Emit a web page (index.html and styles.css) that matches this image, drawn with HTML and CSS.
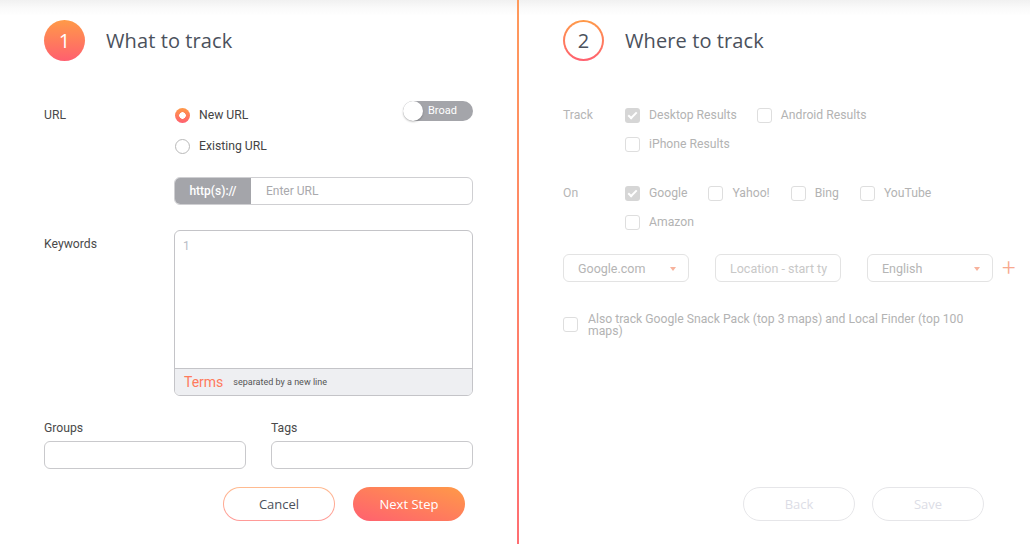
FILE: index.html
```html
<!DOCTYPE html>
<html lang="en">
<head>
  <meta charset="UTF-8" />
  <meta name="viewport" content="width=device-width, initial-scale=1.0"/>
  <title>Add Keywords</title>
  <link rel="stylesheet" href="styles.css">
</head>
<body>

  <div class="page">
    <div class="panel panel-left">
      <div class="step-head">
        <div class="step-num filled">1</div>
        <h2>What to track</h2>
      </div>

      <div class="form-row url-row">
        <div class="row-label">URL</div>
        <div class="row-control">
          <div class="url-options">
            <div class="radios">
              <label class="radio checked"><span class="dot"></span>New URL</label>
              <label class="radio"><span class="dot"></span>Existing URL</label>
            </div>
            <div class="toggle"><span class="knob"></span><span class="toggle-text">Broad</span></div>
          </div>
          <div class="url-input">
            <span class="prefix">http(s)://</span>
            <span class="placeholder">Enter URL</span>
          </div>
        </div>
      </div>

      <div class="form-row keywords-row">
        <div class="row-label">Keywords</div>
        <div class="row-control">
          <div class="keywords-box">
            <div class="keywords-area"><span class="line-num">1</span></div>
            <div class="keywords-foot">
              <span class="terms">Terms</span>
              <span class="hint">separated by a new line</span>
            </div>
          </div>
        </div>
      </div>

      <div class="pair-row">
        <div class="field">
          <div class="field-label">Groups</div>
          <div class="text-box"></div>
        </div>
        <div class="field">
          <div class="field-label">Tags</div>
          <div class="text-box"></div>
        </div>
      </div>

      <div class="actions">
        <button class="btn btn-outline">Cancel</button>
        <button class="btn btn-primary">Next Step</button>
      </div>
    </div>

    <div class="divider"></div>

    <div class="panel panel-right">
      <div class="step-head">
        <div class="step-num outline"><span>2</span></div>
        <h2>Where to track</h2>
      </div>

      <div class="form-row track-row">
        <div class="row-label muted">Track</div>
        <div class="check-lines">
          <div class="check-line">
            <label class="check checked"><span class="box"></span>Desktop Results</label>
            <label class="check"><span class="box"></span>Android Results</label>
          </div>
          <div class="check-line">
            <label class="check"><span class="box"></span>iPhone Results</label>
          </div>
        </div>
      </div>

      <div class="form-row on-row">
        <div class="row-label muted">On</div>
        <div class="check-lines">
          <div class="check-line engines">
            <label class="check checked"><span class="box"></span>Google</label>
            <label class="check"><span class="box"></span>Yahoo!</label>
            <label class="check"><span class="box"></span>Bing</label>
            <label class="check"><span class="box"></span>YouTube</label>
          </div>
          <div class="check-line">
            <label class="check"><span class="box"></span>Amazon</label>
          </div>
        </div>
      </div>

      <div class="select-row">
        <div class="select">Google.com<span class="caret"></span></div>
        <div class="select location">Location - start ty</div>
        <div class="select">English<span class="caret"></span></div>
        <span class="plus">+</span>
      </div>

      <label class="check snack"><span class="box"></span><span>Also track Google Snack Pack (top 3 maps) and Local Finder (top 100 maps)</span></label>

      <div class="actions actions-right">
        <button class="btn btn-disabled">Back</button>
        <button class="btn btn-disabled">Save</button>
      </div>
    </div>
  </div>

</body>
</html>
```

FILE: styles.css
```css
body {
  margin: 0;
  font-family: Roboto, "Liberation Sans", Arial, sans-serif;
  font-size: 12.2px;
  color: #4a4a4a;
  background: linear-gradient(to bottom, #f1f1f1 0, #fafafa 8px, #ffffff 16px);
}

.page {
  display: flex;
  height: 544px;
}

.panel {
  box-sizing: border-box;
  padding: 20px 0 0 44px;
}

.panel-left {
  width: 517px;
}

.divider {
  width: 2px;
  background: linear-gradient(to bottom, #ff9a5c, #ff6e72);
}

.panel-right {
  flex: 1;
  display: flex;
  flex-direction: column;
  padding-bottom: 23px;
}

/* step header */
.step-head {
  display: flex;
  align-items: center;
  gap: 21px;
  height: 41px;
}

.step-head h2 {
  margin: 0;
  font-family: "Open Sans", sans-serif;
  font-weight: 400;
  font-size: 20px;
  color: #4b515c;
  letter-spacing: 0.1px;
}

.step-num {
  width: 41px;
  height: 41px;
  border-radius: 50%;
  display: flex;
  align-items: center;
  justify-content: center;
  font-family: "Open Sans", sans-serif;
  font-size: 20px;
  box-sizing: border-box;
}

.step-num.filled {
  background: linear-gradient(to bottom, #ff9a48, #ff5f6f);
  color: white;
}

.step-num.outline {
  background: linear-gradient(to bottom, #ff9a48, #ff6070);
  padding: 2px;
}

.step-num.outline span {
  width: 100%;
  height: 100%;
  border-radius: 50%;
  background: white;
  color: #4b515c;
  display: flex;
  align-items: center;
  justify-content: center;
}

/* rows */
.form-row {
  display: flex;
}

.row-label {
  width: 130px;
  line-height: 20px;
  flex-shrink: 0;
}

.row-control {
  width: 299px;
}

.url-row {
  margin-top: 44px;
}

.url-options {
  display: flex;
  justify-content: space-between;
  align-items: flex-start;
}

.radios {
  display: flex;
  flex-direction: column;
  gap: 10px;
  padding-left: 1px;
}

.radio {
  display: flex;
  align-items: center;
  gap: 9px;
  line-height: 21px;
  color: #444;
}

.radio .dot {
  width: 15px;
  height: 15px;
  border-radius: 50%;
  border: 1px solid #b9b9b9;
  box-sizing: border-box;
  background: white;
}

.radio.checked .dot {
  border: none;
  background: radial-gradient(circle, white 0 3px, transparent 3.5px), linear-gradient(to bottom, #ff9a48, #ff6070);
}

.toggle {
  position: relative;
  width: 70px;
  height: 20px;
  border-radius: 10px;
  background: #a4a5aa;
  margin-top: -4px;
}

.knob {
  position: absolute;
  left: 0;
  top: 0;
  width: 20px;
  height: 20px;
  border-radius: 50%;
  background: white;
  box-shadow: 0 1px 2px rgba(0, 0, 0, 0.25);
}

.toggle-text {
  position: absolute;
  left: 25px;
  top: 3px;
  font-size: 11px;
  color: white;
}

.url-input {
  display: flex;
  height: 28px;
  margin-top: 20px;
  border: 1px solid #cfcfd2;
  border-radius: 6px;
  overflow: hidden;
  box-sizing: border-box;
}

.prefix {
  width: 76px;
  background: #a4a5aa;
  color: white;
  font-size: 12px;
  font-weight: 500;
  display: flex;
  align-items: center;
  justify-content: center;
}

.placeholder {
  display: flex;
  align-items: center;
  padding-left: 15px;
  font-size: 12px;
  color: #a9a9ad;
}

.keywords-row {
  margin-top: 25px;
}

.keywords-row .row-label {
  padding-top: 4px;
}

.keywords-box {
  height: 166px;
  border: 1px solid #c4c4c8;
  border-radius: 6px;
  box-sizing: border-box;
  display: flex;
  flex-direction: column;
  overflow: hidden;
}

.keywords-area {
  flex: 1;
  padding: 8px 8px;
}

.line-num {
  font-size: 12px;
  color: #b8bcc6;
}

.keywords-foot {
  height: 26px;
  background: #eeeff2;
  border-top: 1px solid #c4c4c8;
  display: flex;
  align-items: center;
  gap: 10px;
  padding-left: 9px;
}

.terms {
  color: #ff7a5c;
  font-size: 14px;
}

.hint {
  font-size: 9px;
  color: #555;
}

.pair-row {
  display: grid;
  grid-template-columns: 202px 202px;
  column-gap: 25px;
  margin-top: 22px;
}

.field-label {
  line-height: 20px;
  margin-bottom: 3px;
}

.text-box {
  height: 28px;
  border: 1px solid #c9c9cc;
  border-radius: 6px;
  box-sizing: border-box;
}

.actions {
  display: flex;
  justify-content: flex-end;
  gap: 18px;
  margin-top: 18px;
  margin-right: 52px;
}

.btn {
  width: 112px;
  height: 34px;
  border-radius: 17px;
  font-family: "Open Sans", sans-serif;
  font-size: 13px;
  box-sizing: border-box;
  cursor: pointer;
}

.btn-outline {
  border: 1px solid transparent;
  background: linear-gradient(white, white) padding-box, linear-gradient(to bottom, #ffbb90, #ff9a98) border-box;
  color: #4b515c;
}

.btn-primary {
  border: none;
  background: linear-gradient(to top right, #ff6070, #ff9a48);
  color: white;
}

.btn-disabled {
  border: 1px solid #e6e6e9;
  background: white;
  color: #dcdde6;
}

.actions-right {
  margin-top: auto;
  margin-right: 46px;
  gap: 17px;
}

/* right side checkboxes */
.muted {
  color: #b5b5b5;
}

.track-row {
  margin-top: 44px;
}

.track-row .row-label,
.on-row .row-label {
  width: 62px;
}

.on-row {
  margin-top: 28px;
}

.check-lines {
  display: flex;
  flex-direction: column;
  gap: 8px;
}

.check-line {
  display: flex;
  gap: 20px;
}

.check-line.engines {
  gap: 21px;
}

.check {
  display: flex;
  align-items: center;
  gap: 9px;
  line-height: 21px;
  color: #b3b3b3;
}

.check .box {
  width: 15px;
  height: 15px;
  border: 1px solid #dedede;
  border-radius: 3px;
  box-sizing: border-box;
  flex-shrink: 0;
  position: relative;
}

.check.checked .box {
  border: none;
  background: #d6d6d6;
}

.check.checked .box::after {
  content: "";
  position: absolute;
  left: 5px;
  top: 2px;
  width: 3px;
  height: 7px;
  border: solid white;
  border-width: 0 2px 2px 0;
  transform: rotate(45deg);
}

.select-row {
  display: flex;
  align-items: center;
  gap: 26px;
  margin-top: 21px;
}

.select {
  position: relative;
  width: 126px;
  height: 28px;
  border: 1px solid #e3e3e3;
  border-radius: 6px;
  box-sizing: border-box;
  padding-left: 14px;
  display: flex;
  align-items: center;
  font-size: 12.5px;
  color: #b5b5b5;
  white-space: nowrap;
  overflow: hidden;
}

.select.location {
  color: #c8c8c8;
}

.caret {
  position: absolute;
  right: 12px;
  top: 12px;
  border-left: 3.5px solid transparent;
  border-right: 3.5px solid transparent;
  border-top: 4px solid #f7b29c;
}

.plus {
  margin-left: -17px;
  font-size: 24px;
  font-weight: 300;
  color: #f8a98f;
  line-height: 20px;
}

.check.snack {
  margin-top: 31px;
  align-items: flex-start;
  gap: 10px;
  font-size: 12.2px;
  line-height: 12px;
  width: 420px;
}

.check.snack .box {
  margin-top: 4px;
}
```
